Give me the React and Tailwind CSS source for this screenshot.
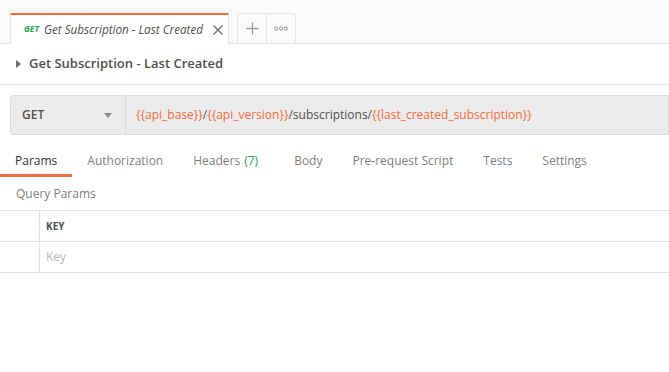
import React from "react";

const tabs = [
  { label: "Params", active: true },
  { label: "Authorization" },
  { label: "Headers", count: "(7)" },
  { label: "Body" },
  { label: "Pre-request Script" },
  { label: "Tests" },
  { label: "Settings" },
];

const Var = ({ children }) => <span className="text-[#f26b3a]">{`{{${children}}}`}</span>;

const App = () => {
  return (
    <div
      className="w-[669px] h-[372px] overflow-hidden bg-white text-[#505050]"
      style={{ fontFamily: '"Open Sans", sans-serif' }}
    >
      {/* request tabs */}
      <div className="h-[44px] bg-[#fafafa] border-b border-[#e4e4e4] flex items-end pl-[10px]">
        <div className="relative w-[219px] h-[31px] bg-white border-t-2 border-[#f26b3a] border-l border-r border-l-[#e4e4e4] border-r-[#e4e4e4] -mb-px flex items-center pl-[13px] pr-[4px]">
          <span className="text-[8.5px] font-bold italic text-[#26a154] mr-[5px]">GET</span>
          <span className="text-[11.7px] italic text-[#505050] whitespace-nowrap">Get Subscription - Last Created</span>
          <svg width="12" height="12" viewBox="0 0 12 12" className="ml-auto">
            <path d="M1.5 1.5L10.5 10.5M10.5 1.5L1.5 10.5" stroke="#707070" strokeWidth="1.4" />
          </svg>
        </div>
        <div className="ml-[8px] h-[30px] flex border border-b-0 border-[#e4e4e4] rounded-t-[3px]">
          <div className="w-[29px] flex items-center justify-center border-r border-[#e4e4e4]">
            <svg width="13" height="13" viewBox="0 0 13 13">
              <path d="M6.5 0.5V12.5M0.5 6.5H12.5" stroke="#9a9a9a" strokeWidth="1.3" />
            </svg>
          </div>
          <div className="w-[28px] flex items-center justify-center">
            <svg width="14" height="5" viewBox="0 0 14 5">
              <circle cx="2.2" cy="2.5" r="1.6" fill="none" stroke="#8a8a8a" strokeWidth="0.9" />
              <circle cx="7" cy="2.5" r="1.6" fill="none" stroke="#8a8a8a" strokeWidth="0.9" />
              <circle cx="11.8" cy="2.5" r="1.6" fill="none" stroke="#8a8a8a" strokeWidth="0.9" />
            </svg>
          </div>
        </div>
      </div>

      {/* title */}
      <div className="h-[41px] border-b border-[#e4e4e4] flex items-center pl-[16px]">
        <svg width="5" height="8" viewBox="0 0 5 8" className="mr-[8px]">
          <path d="M0 0L5 4L0 8Z" fill="#707070" />
        </svg>
        <span className="text-[13px] font-semibold text-[#505050]">Get Subscription - Last Created</span>
      </div>

      {/* url bar */}
      <div className="pl-[10px] pt-[10px] flex">
        <div className="w-[116px] h-[40px] bg-[#ececec] border border-[#dcdcdc] rounded-l-[3px] flex items-center pl-[11px] pr-[13px]">
          <span className="text-[12px] font-semibold text-[#505050] flex-1">GET</span>
          <svg width="8" height="5" viewBox="0 0 8 5">
            <path d="M0 0H8L4 5Z" fill="#8a8a8a" />
          </svg>
        </div>
        <div className="flex-1 h-[40px] bg-[#ececec] border border-l-0 border-[#dcdcdc] flex items-center pl-[10px] text-[12px] text-[#505050] whitespace-nowrap">
          <Var>api_base</Var>/<Var>api_version</Var>/subscriptions/<Var>last_created_subscription</Var>
        </div>
      </div>

      {/* tabs */}
      <div className="flex mt-[11px] h-[31px]">
        {tabs.map((t) => (
          <div
            key={t.label}
            className={`px-[15px] pt-[2px] flex items-center text-[12px] border-b-[3px] ${
              t.active ? "border-[#f26b3a] text-[#333333]" : "border-transparent text-[#808080]"
            } ${t.count ? "mr-[6px]" : ""}`}
          >
            {t.label}
            {t.count && <span className="ml-[4px] text-[#26a154]">{t.count}</span>}
          </div>
        ))}
      </div>

      {/* query params */}
      <div className="h-[33px] flex items-center pl-[16px] text-[12px] text-[#808080]">Query Params</div>
      <div className="border-t border-[#e4e4e4]">
        <div className="h-[31px] flex border-b border-[#e4e4e4]">
          <div className="w-[40px] border-r border-[#e4e4e4]" />
          <div className="flex items-center pl-[6px] text-[10px] font-bold text-[#505050]">KEY</div>
        </div>
        <div className="h-[31px] flex border-b border-[#e4e4e4]">
          <div className="w-[40px] border-r border-[#e4e4e4]" />
          <div className="flex items-center pl-[6px] text-[12px] text-[#b8b8b8]">Key</div>
        </div>
      </div>
    </div>
  );
};

export default App;
